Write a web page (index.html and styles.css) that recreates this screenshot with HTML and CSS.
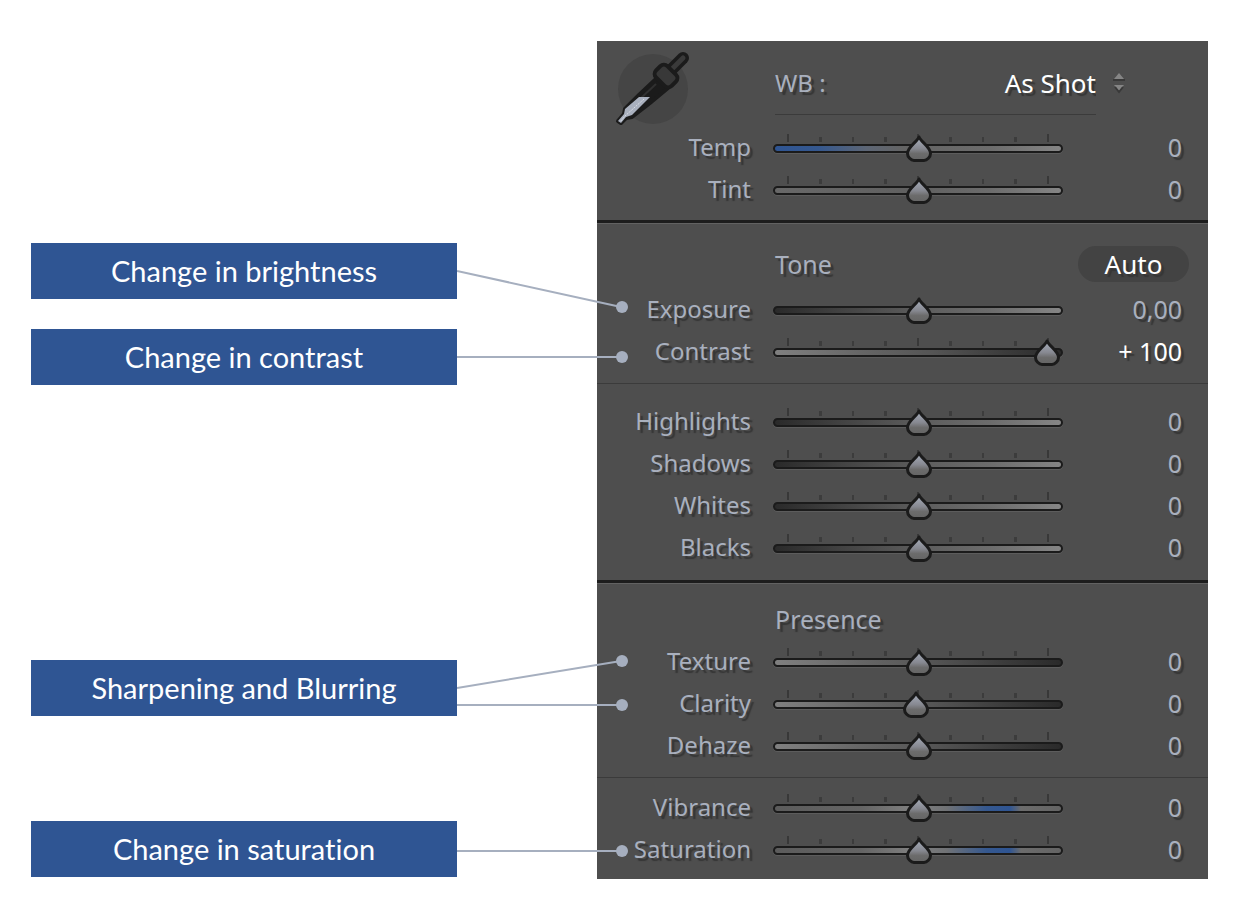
FILE: index.html
```
<!DOCTYPE html>
<html lang="en">
<head>
<meta charset="utf-8">
<title>Basic adjustments</title>
<link rel="stylesheet" href="styles.css">
</head>
<body>
<main class="figure">
  <div class="callouts">
    <p class="callout callout-brightness">Change in brightness</p>
    <p class="callout callout-contrast">Change in contrast</p>
    <p class="callout callout-sharpness">Sharpening and Blurring</p>
    <p class="callout callout-saturation">Change in saturation</p>
  </div>
  <div class="leaders">
    <svg class="leader-lines" width="172" height="838" viewBox="0 0 172 838" aria-hidden="true">
      <g stroke="#a6afbf" stroke-width="2">
        <path d="M0 230L164 266M0 316H164M0 647L164 620M0 664H164M0 810H164"/>
      </g>
      <g fill="#a6afbf">
        <circle cx="165" cy="266" r="6"/><circle cx="165" cy="316" r="6"/><circle cx="165" cy="620" r="6"/><circle cx="165" cy="664" r="6"/><circle cx="165" cy="810" r="6"/>
      </g>
    </svg>
  </div>
  <form class="panel">
    <section class="group">
      <div class="wb-row">
        <button class="dropper" type="button" aria-label="White balance selector">
          <svg width="76" height="76" viewBox="0 0 76 76">
            <circle cx="38" cy="38" r="35" fill="#454545"/>
            <path d="M68 7L50 25" stroke="#1b1b1b" stroke-width="12" stroke-linecap="round"/>
            <path d="M68 7L54 21" stroke="#3a3a3a" stroke-width="5" stroke-linecap="round"/>
            <path d="M42 27L53 37L35 52L17 66L11 67L6 72L3 70L9 63L10 58L24 44Z" fill="#1b1b1b" stroke="#1b1b1b" stroke-width="4" stroke-linejoin="round"/>
            <path d="M41 33L26 47" stroke="#303030" stroke-width="2"/>
            <path d="M24 46H35L17 64L11 66L6 72L3 70L9 63L10 58Z" fill="#a9b0be"/>
            <path d="M29 48L10 65L5 71" fill="none" stroke="#d8dce4" stroke-width="1" stroke-dasharray="2 1"/>
            <rect x="40" y="17" width="22" height="16" rx="5" transform="rotate(45 51 25)" fill="#383838" stroke="#1b1b1b" stroke-width="4"/>
          </svg>
        </button>
        <div class="wb-field">
          <label for="wb">WB :</label>
          <select id="wb"><option>As Shot</option><option>Auto</option><option>Custom</option></select>
          <svg class="arrows" width="14" height="22" viewBox="0 0 14 22" aria-hidden="true"><path d="M2 7L7 1L12 7ZM2 13L7 19L12 13Z" fill="#858585"/><path d="M1 8H13M3 15L7 20L11 15" fill="none" stroke="#393939" stroke-width="2"/></svg>
        </div>
      </div>
      <div class="row"><label for="temp">Temp</label><div class="track ticks cool"><input id="temp" type="range" min="-100" max="100" value="0"></div><output for="temp">0</output></div>
      <div class="row"><label for="tint">Tint</label><div class="track ticks neutral"><input id="tint" type="range" min="-100" max="100" value="0"></div><output for="tint">0</output></div>
    </section>
    <section class="group tone">
      <div class="head"><h2>Tone</h2><button class="auto" type="button">Auto</button></div>
      <div class="row"><label for="exposure">Exposure</label><div class="track light"><input id="exposure" type="range" min="-100" max="100" value="0"></div><output for="exposure">0,00</output></div>
      <div class="row"><label for="contrast">Contrast</label><div class="track ticks dark"><input id="contrast" type="range" min="-100" max="100" value="100"></div><output class="changed" for="contrast">+ 100</output></div>
      <hr>
      <div class="row"><label for="highlights">Highlights</label><div class="track ticks light"><input id="highlights" type="range" min="-100" max="100" value="0"></div><output for="highlights">0</output></div>
      <div class="row"><label for="shadows">Shadows</label><div class="track ticks light"><input id="shadows" type="range" min="-100" max="100" value="0"></div><output for="shadows">0</output></div>
      <div class="row"><label for="whites">Whites</label><div class="track ticks light"><input id="whites" type="range" min="-100" max="100" value="0"></div><output for="whites">0</output></div>
      <div class="row"><label for="blacks">Blacks</label><div class="track ticks light"><input id="blacks" type="range" min="-100" max="100" value="0"></div><output for="blacks">0</output></div>
    </section>
    <section class="group presence">
      <div class="head"><h2>Presence</h2></div>
      <div class="row"><label for="texture">Texture</label><div class="track ticks dark"><input id="texture" type="range" min="-100" max="100" value="0"></div><output for="texture">0</output></div>
      <div class="row"><label for="clarity">Clarity</label><div class="track ticks dark"><input id="clarity" type="range" min="-100" max="100" value="-2"></div><output for="clarity">0</output></div>
      <div class="row"><label for="dehaze">Dehaze</label><div class="track ticks dark"><input id="dehaze" type="range" min="-100" max="100" value="0"></div><output for="dehaze">0</output></div>
      <hr>
      <div class="row"><label for="vibrance">Vibrance</label><div class="track ticks vivid"><input id="vibrance" type="range" min="-100" max="100" value="0"></div><output for="vibrance">0</output></div>
      <div class="row"><label for="saturation">Saturation</label><div class="track ticks vivid"><input id="saturation" type="range" min="-100" max="100" value="0"></div><output for="saturation">0</output></div>
    </section>
  </form>
</main>
</body>
</html>
```

FILE: styles.css
```
* {
  box-sizing: border-box;
}

body {
  margin: 0;
  background: #fff;
  font-family: "Noto Sans", "Open Sans", sans-serif;
}

.figure {
  display: grid;
  grid-template-columns: minmax(280px, 1fr) 140px minmax(480px, 611px);
  padding: 41px 30px 37px 31px;
}

.callout {
  margin: 0;
  padding: 10px;
  background: #2f5593;
  color: #fff;
  font: 29px/36px Lato, sans-serif;
  font-variant-ligatures: none;
  text-align: center;
}

.callout-brightness { margin-top: 202px; }
.callout-contrast { margin-top: 30px; }
.callout-sharpness { margin-top: 275px; }
.callout-saturation { margin-top: 105px; }

.leaders {
  position: relative;
}

.leader-lines {
  position: absolute;
  top: 0;
  left: 0;
  z-index: 1;
  pointer-events: none;
}

.panel {
  background: #4e4e4e;
  color: #a9b0be;
  font-size: 24px;
  line-height: 32px;
  text-shadow: 3px 3px 1px #363636;
}

.group {
  padding-bottom: 9px;
}

.group + .group {
  border-top: 3px solid #1d1d1d;
  box-shadow: inset 0 1px #626262;
}

.tone {
  padding: 16px 0 11px;
}

.presence {
  padding: 14px 0 8px;
}

.wb-row {
  display: flex;
  align-items: flex-start;
  gap: 84px;
  height: 86px;
  padding: 10px 82px 0 18px;
}

.dropper {
  flex: none;
  width: 76px;
  height: 76px;
  padding: 0;
  border: 0;
  background: none;
}

.wb-field {
  display: flex;
  flex: 1;
  align-items: center;
  height: 64px;
  background: linear-gradient(#3b3b3b, #3b3b3b) left bottom / calc(100% - 30px) 1px no-repeat;
}

select {
  flex: 1;
  min-width: 0;
  padding: 0 16px;
  border: 0;
  appearance: none;
  background: none;
  color: #fff;
  font: inherit;
  font-size: 26px;
  text-align-last: right;
  text-shadow: inherit;
}

.arrows {
  flex: none;
}

.head {
  display: flex;
  align-items: center;
  justify-content: space-between;
  height: 50px;
  padding: 0 19px 0 178px;
}

.presence .head {
  height: 44px;
}

h2 {
  margin: 0;
  font: inherit;
  font-size: 25px;
}

.auto {
  width: 111px;
  height: 36px;
  padding: 0;
  border: 0;
  border-radius: 18px;
  background: #434343;
  color: #fff;
  font: inherit;
  font-size: 26px;
  text-shadow: inherit;
}

.row {
  display: grid;
  grid-template-columns: 154px minmax(0, 1fr) 97px;
  column-gap: 22px;
  align-items: center;
  height: 42px;
  padding-right: 26px;
}

.row label,
.row output {
  padding-bottom: 2px;
  text-align: right;
}

.row output {
  font-size: 25px;
}

.row .changed {
  color: #fff;
}

.track {
  height: 28px;
}

.ticks {
  background:
    linear-gradient(#383838, #383838) 14px 0 / 2px 8px no-repeat,
    linear-gradient(#383838, #383838) 50% 0 / 2px 8px no-repeat,
    linear-gradient(#383838, #383838) calc(100% - 14px) 0 / 2px 8px no-repeat,
    repeating-linear-gradient(90deg, #3c3c3c 0 2px, transparent 2px calc((100% - 2px) / 8)) 14px 3px / calc(100% - 28px) 5px no-repeat;
}

input {
  display: block;
  width: 100%;
  height: 28px;
  margin: 0;
  appearance: none;
  background: none;
}

input::-webkit-slider-runnable-track {
  height: 9px;
  border: 2px solid #1b1b1b;
  border-radius: 5px;
  background: var(--fill);
  box-shadow: 0 1px #5c5c5c;
}

input::-webkit-slider-thumb {
  width: 30px;
  height: 30px;
  margin-top: -12px;
  appearance: none;
  background: url("data:image/svg+xml,%3Csvg xmlns='http://www.w3.org/2000/svg' width='30' height='30'%3E%3Cdefs%3E%3ClinearGradient id='g' x2='0' y2='1'%3E%3Cstop stop-color='%23a9b0be'/%3E%3Cstop offset='.5' stop-color='%23868890'/%3E%3Cstop offset='.7' stop-color='%236c6c6c'/%3E%3Cstop offset='1' stop-color='%23646464'/%3E%3C/linearGradient%3E%3C/defs%3E%3Cpath d='M16 3C18 8 27.500 13 27.500 19.500C27.500 23 24 26.500 21 26.500H11C8 26.500 4.500 23 4.500 19.500C4.500 13 14 8 16 3Z' fill='url(%23g)' stroke='%231b1b1b' stroke-width='3' stroke-linejoin='round'/%3E%3C/svg%3E") center / 30px 30px no-repeat;
}

.neutral { --fill: linear-gradient(90deg, #686868, #606060 50%, #6c6c6c 75%, #858585); }
.cool { --fill: linear-gradient(90deg, #2f5593, #35588f 15%, #5d6675 32%, #646464 45%, #6c6c6c 75%, #858585); }
.light { --fill: linear-gradient(90deg, #2a2a2a, #444 25%, #5c5c5c 50%, #6c6c6c 75%, #858585); }
.dark { --fill: linear-gradient(90deg, #808080, #666 30%, #555 55%, #3c3c3c 80%, #2a2a2a); }
.vivid { --fill: linear-gradient(90deg, #5c5c5c, #646464 30%, #808080 48%, #707275 60%, #35588f 74%, #2f5593 82%, #6c6c6c 86%, #646464); }

hr {
  height: 1px;
  margin: 10px 0 17px;
  border: 0;
  background: #3b3b3b;
}

.presence hr {
  margin-bottom: 9px;
}
```
